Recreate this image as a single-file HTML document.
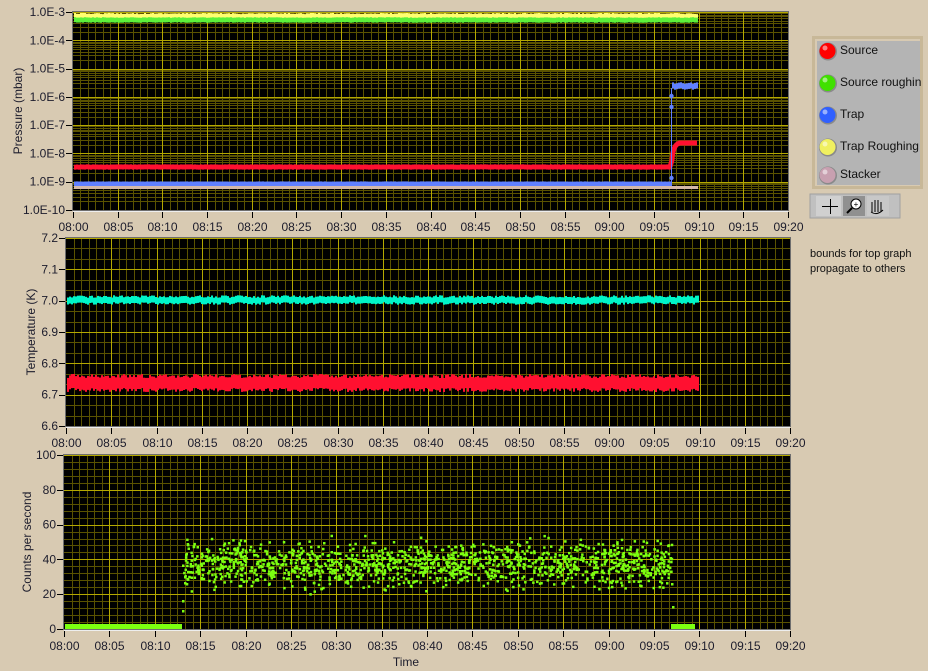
<!DOCTYPE html>
<html><head><meta charset="utf-8">
<style>
html,body{margin:0;padding:0;background:#d8cab2;width:928px;height:671px;overflow:hidden;font-family:"Liberation Sans",sans-serif;}
svg{position:absolute;left:0;top:0}
.note{position:absolute;left:810px;top:247px;font-size:11px;line-height:15px;color:#111}
</style></head><body>
<svg id="s" width="928" height="671" xmlns="http://www.w3.org/2000/svg" font-family="Liberation Sans, sans-serif"></svg>
<div class="note">bounds for top graph<br>propagate to others</div>
<script>
var S=document.getElementById('s'),out=[];
var seed=12345;function rnd(){seed=(seed*16807)%2147483647;return seed/2147483647;}
function L(x1,y1,x2,y2,c,w){out.push('<line x1="'+x1+'" y1="'+y1+'" x2="'+x2+'" y2="'+y2+'" stroke="'+c+'" stroke-width="'+(w||1)+'"/>');}
function R(x,y,w,h,c){out.push('<rect x="'+x+'" y="'+y+'" width="'+w+'" height="'+h+'" fill="'+c+'"/>');}
function T(x,y,t,a,extra){out.push('<text x="'+x+'" y="'+y+'" font-size="12" fill="#1c1c2c" text-anchor="'+(a||'middle')+'" '+(extra||'')+'>'+t+'</text>');}
var MIN='#5a5200',MAJ='#b4a800';
var times=['08:00','08:05','08:10','08:15','08:20','08:25','08:30','08:35','08:40','08:45','08:50','08:55','09:00','09:05','09:10','09:15','09:20'];
function graph(x0,y0,x1,y1,hlines,hmajor,ylabels,labely,title){
 R(x0,y0,x1-x0,y1-y0,'#000');
 var dx=(x1-x0)/16;
 for(var i=0;i<16;i++)for(var k=1;k<6;k++){var x=Math.round(x0+dx*(i+k/6))+.5;L(x,y0,x,y1,MIN);}
 hlines.forEach(function(y){L(x0,Math.round(y)+.5,x1,Math.round(y)+.5,MIN);});
 for(var i=1;i<16;i++){var x=Math.round(x0+dx*i)+.5;L(x,y0,x,y1,MAJ);}
 hmajor.forEach(function(y){L(x0,Math.round(y)+.5,x1,Math.round(y)+.5,MAJ);});
 out.push('<rect x="'+(x0-.5)+'" y="'+(y0-.5)+'" width="'+(x1-x0+1)+'" height="'+(y1-y0+1)+'" fill="none" stroke="#6e6e6e"/>');
 L(x0,y1+1.5,x1,y1+1.5,'#eee',1);
 for(var i=0;i<=16;i++){var x=Math.round(x0+dx*i)+.5;L(x,y1+2,x,y1+8,'#000');T(x,y1+21,times[i]);}
 ylabels.forEach(function(p){L(x0-7,Math.round(p[0])+.5,x0-1,Math.round(p[0])+.5,'#000');T(x0-8,p[0]+4,p[1],'end');});
 out.push('<text transform="translate('+labely[0]+','+labely[1]+') rotate(-90)" font-size="12" fill="#1c1c2c" text-anchor="middle">'+title+'</text>');
}
var g1={x0:73,y0:12,x1:788,y1:210};var dec=(g1.y1-g1.y0)/7;
var h1=[],m1=[],yl1=[];
for(var d=0;d<7;d++){for(var m=2;m<10;m++){h1.push(g1.y1-dec*d-dec*Math.log10(m));}}
for(var d=0;d<=7;d++){m1.push(g1.y1-dec*d);yl1.push([g1.y1-dec*d,'1.0E-'+(10-d)]);}
graph(g1.x0,g1.y0,g1.x1,g1.y1,h1,m1,yl1,[22,g1.y0+(g1.y1-g1.y0)/2],'Pressure (mbar)');
function band(xa,xb,yc,h,c,amp){var s='';for(var x=xa;x<xb;x+=2){var j=(rnd()-.5)*amp;s+='<rect x="'+x+'" y="'+(yc-h/2+j).toFixed(1)+'" width="2" height="'+h+'" fill="'+c+'"/>';}out.push(s);}
band(74,697,16,5,'#ffff70',1.2);
band(74,697,20,5,'#5cf03a',0.6);
band(74,671,167,5,'#ff1030',0.4);
out.push('<path d="M670 167 L672 160 Q673 144 680 143 L697 143" fill="none" stroke="#ff1030" stroke-width="5"/>');
band(74,671,184,5,'#6080ff',0.2);
band(74,697,187.5,3,'#d4b8a8',0);
L(671.5,185,671.5,88,'#6080ff',1);
[178,107,96].forEach(function(y){out.push('<circle cx="671.5" cy="'+y+'" r="2.2" fill="#6080ff"/>');});
band(672,697,86,6,'#6080ff',1.5);
var g2={x0:66,y0:238,x1:790,y1:426};var st=(g2.y1-g2.y0)/6;
var h2=[],m2=[],yl2=[];var lab2=['7.2','7.1','7.0','6.9','6.8','6.7','6.6'];
for(var i=0;i<6;i++)for(var k=1;k<3;k++)h2.push(g2.y0+st*(i+k/3));
for(var i=0;i<=6;i++){m2.push(g2.y0+st*i);yl2.push([g2.y0+st*i,lab2[i]]);}
graph(g2.x0,g2.y0,g2.x1,g2.y1,h2,m2,yl2,[35,g2.y0+(g2.y1-g2.y0)/2],'Temperature (K)');
band(67,698,300,7,'#00f5c8',2.5);
band(67,698,383,14,'#ff1030',4);
var g3={x0:64,y0:455,x1:790,y1:629};var st3=(g3.y1-g3.y0)/5;
var h3=[],m3=[],yl3=[];var lab3=['100','80','60','40','20','0'];
for(var i=0;i<5;i++)for(var k=1;k<5;k++)h3.push(g3.y0+st3*(i+k/5));
for(var i=0;i<=5;i++){m3.push(g3.y0+st3*i);yl3.push([g3.y0+st3*i,lab3[i]]);}
graph(g3.x0,g3.y0,g3.x1,g3.y1,h3,m3,yl3,[31,g3.y0+(g3.y1-g3.y0)/2],'Counts per second');
T(406,666,'Time');
var G='#7cff10';
R(65,624,117,5,G);R(671,624,24,5,G);
var pts='';function yv(v){return g3.y1-v*(g3.y1-g3.y0)/100;}
for(var i=0;i<1400;i++){var x=183+rnd()*489;var v=37+(rnd()+rnd()+rnd()-1.5)*12;pts+='<rect x="'+(x-1).toFixed(1)+'" y="'+(yv(v)-1).toFixed(1)+'" width="2.5" height="2.5" fill="'+G+'"/>';}
[[182,610],[182,600],[184,582],[184,576],[671,583],[672,606]].forEach(function(p){pts+='<rect x="'+p[0]+'" y="'+p[1]+'" width="2.5" height="2.5" fill="'+G+'"/>';});
out.push(pts);
out.push('<rect x="813.5" y="37.5" width="108" height="150" fill="#d8cab2" stroke="#c8b898" stroke-width="3"/>');
R(817,41,103,144,'#b4b4b4');
var items=[['Source','#ff0000'],['Source roughin','#40e000'],['Trap','#3060ff'],['Trap Roughing','#f0f060'],['Stacker','#c8a0b0']];
items.forEach(function(it,i){var y=[50,82,114,146,174][i];
 out.push('<circle cx="828" cy="'+(y+1.5)+'" r="9" fill="#8a8a8a"/><circle cx="827.5" cy="'+(y+1)+'" r="8" fill="'+it[1]+'"/><circle cx="825" cy="'+(y-2)+'" r="2.5" fill="#fff" opacity=".5"/>');
 out.push('<text x="840" y="'+(y+4)+'" font-size="12" fill="#111">'+it[0]+'</text>');});
out.push('<rect x="810" y="194" width="90" height="24" fill="#c0c0c0" stroke="#a0a0a0"/>');
out.push('<rect x="816" y="196" width="25" height="20" fill="#d0d0d0"/><rect x="843" y="196" width="22" height="20" fill="#909090"/><rect x="867" y="196" width="22" height="20" fill="#c8c8c8"/>');
L(822,206.5,838,206.5,'#000');L(830.5,199,830.5,214,'#000');
out.push('<circle cx="856" cy="204" r="5" fill="#fff" stroke="#000"/><line x1="852" y1="208" x2="847" y2="213" stroke="#000" stroke-width="2"/><text x="856" y="207" font-size="8" text-anchor="middle">+</text>');
out.push('<path d="M872 212 L872 202 M875 212 L875 200 M878 212 L878 200 M881 212 L881 202 M871 212 Q877 216 883 210" stroke="#000" fill="none"/>');
S.innerHTML=out.join('');
</script>
</body></html>
